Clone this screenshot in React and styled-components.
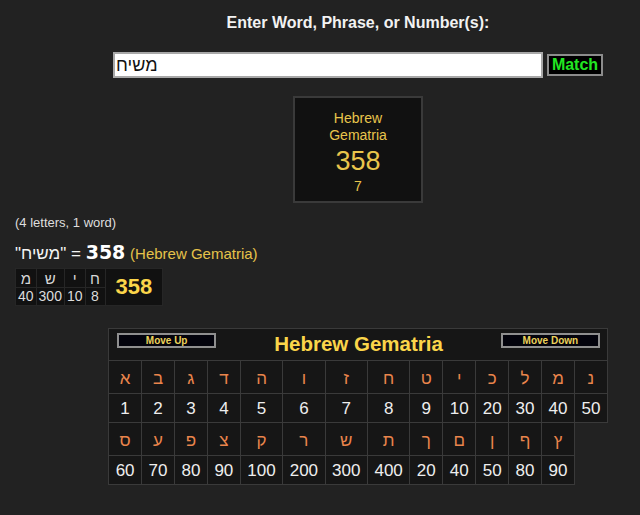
import React from 'react';
import styled, { createGlobalStyle } from 'styled-components';

const Global = createGlobalStyle`
  html, body { margin: 0; padding: 0; background: #222222; }
  body { font-family: "Liberation Sans", Arial, sans-serif; color: #ffffff; }
`;

const Page = styled.div`
  display: flex;
  flex-direction: column;
  padding-top: 14px;
`;

const Centered = styled.div`
  display: flex;
  flex-direction: column;
  align-items: center;
  padding-left: 76px;
`;

const Heading = styled.div`
  font-size: 16px;
  font-weight: bold;
  line-height: 18px;
  color: #f2f2f2;
`;

const SearchRow = styled.div`
  display: flex;
  align-items: center;
  gap: 4px;
  margin-top: 20px;
`;

const Input = styled.input`
  width: 430px;
  height: 26px;
  box-sizing: border-box;
  border: 2px solid #a8a8a8;
  background: #ffffff;
  color: #111111;
  font-family: "Liberation Sans", Arial, sans-serif;
  font-size: 18px;
  padding: 0 1px;
  outline: none;
`;

const MatchButton = styled.button`
  width: 56px;
  height: 22px;
  box-sizing: border-box;
  background: #000000;
  border: 2px solid #8c8c8c;
  color: #22e622;
  font-family: "Liberation Sans", Arial, sans-serif;
  font-weight: bold;
  font-size: 16px;
  padding: 0;
  line-height: 18px;
`;

const ValueBox = styled.div`
  margin-top: 18px;
  width: 130px;
  height: 107px;
  box-sizing: border-box;
  border: 2px solid #3a3a3a;
  background: #111111;
  display: flex;
  flex-direction: column;
  align-items: center;
  padding-top: 12px;
  color: #e9c54c;
  text-align: center;
`;

const BoxTitle = styled.div`
  font-size: 14px;
  line-height: 16.5px;
`;

const BoxValue = styled.div`
  font-size: 27px;
  line-height: 28px;
  margin-top: 4px;
`;

const BoxSub = styled.div`
  font-size: 14px;
  line-height: 16px;
  margin-top: 3px;
`;

const Results = styled.div`
  padding-left: 15px;
  margin-top: 12px;
`;

const Counts = styled.div`
  font-size: 13px;
  line-height: 15px;
  color: #dedede;
`;

const Equation = styled.div`
  margin-top: 10px;
  font-size: 17px;
  line-height: 24px;
  color: #f4f4f4;
`;

const Quoted = styled.span`
  unicode-bidi: isolate;
  direction: ltr;
`;

const EqValue = styled.b`
  font-family: "DejaVu Sans", Verdana, sans-serif;
  font-size: 19px;
  color: #ffffff;
`;

const EqCipher = styled.span`
  font-size: 15px;
  color: #e6c24a;
`;

const Breakdown = styled.table`
  margin-top: 2px;
  border-collapse: collapse;
  background: #111111;
  direction: ltr;
`;

const BdCell = styled.td`
  border: 1px solid #262626;
  padding: 0 2px;
  width: 15px;
  text-align: center;
  font-size: ${p => (p.$letter ? '15px' : '14px')};
  line-height: 17px;
  color: ${p => (p.$letter ? '#d8d8d8' : '#dcdcdc')};
  height: ${p => (p.$letter ? '18px' : '17px')};
`;

const BdTotal = styled.td`
  border: 1px solid #262626;
  padding: 0 10px;
  text-align: center;
  font-size: 22px;
  font-weight: bold;
  color: #fbd54a;
`;

const Chart = styled.table`
  margin-top: 22px;
  border-collapse: collapse;
  direction: ltr;
`;

const HeaderCell = styled.td`
  border: 1px solid #3a3a3a;
  background: #161616;
  padding: 3px 7px 4px 8px;
`;

const HeaderBar = styled.div`
  display: flex;
  justify-content: space-between;
  align-items: flex-start;
`;

const MoveButton = styled.button`
  width: 99px;
  height: 15px;
  box-sizing: border-box;
  margin-top: 1px;
  background: #03030c;
  border: 2px solid #8f8f8f;
  color: #ecd25a;
  font-family: "Liberation Sans", Arial, sans-serif;
  font-weight: bold;
  font-size: 10px;
  line-height: 11px;
  padding: 0;
`;

const ChartTitle = styled.div`
  font-size: 20.5px;
  font-weight: bold;
  line-height: 24px;
  color: #fbd54a;
`;

const LetterCell = styled.td`
  border: 1px solid #3a3a3a;
  background: #161616;
  text-align: center;
  font-size: 17px;
  line-height: 19px;
  padding: ${p => (p.$letter ? '8px 6.5px 5px' : '5px 6.5px 4px')};
  color: ${p => (p.$letter ? '#ea854c' : '#eeeeee')};
`;

const groupOne = [
  ['א', 1], ['ב', 2], ['ג', 3], ['ד', 4], ['ה', 5], ['ו', 6], ['ז', 7],
  ['ח', 8], ['ט', 9], ['י', 10], ['כ', 20], ['ל', 30], ['מ', 40], ['נ', 50],
];

const groupTwo = [
  ['ס', 60], ['ע', 70], ['פ', 80], ['צ', 90], ['ק', 100], ['ר', 200], ['ש', 300],
  ['ת', 400], ['ך', 20], ['ם', 40], ['ן', 50], ['ף', 80], ['ץ', 90],
];

const word = [['מ', 40], ['ש', 300], ['י', 10], ['ח', 8]];

function LetterRows({ group }) {
  return (
    <>
      <tr>
        {group.map(([l], i) => (
          <LetterCell key={i} $letter>{l}</LetterCell>
        ))}
      </tr>
      <tr>
        {group.map(([, v], i) => (
          <LetterCell key={i}>{v}</LetterCell>
        ))}
      </tr>
    </>
  );
}

export default function App() {
  return (
    <>
      <Global />
      <Page>
        <Centered>
          <Heading>Enter Word, Phrase, or Number(s):</Heading>
          <SearchRow>
            <Input defaultValue="משיח" />
            <MatchButton>Match</MatchButton>
          </SearchRow>
          <ValueBox>
            <BoxTitle>Hebrew<br />Gematria</BoxTitle>
            <BoxValue>358</BoxValue>
            <BoxSub>7</BoxSub>
          </ValueBox>
        </Centered>
        <Results>
          <Counts>(4 letters, 1 word)</Counts>
          <Equation>
            <Quoted>"משיח"</Quoted> = <EqValue>358</EqValue> <EqCipher>(Hebrew Gematria)</EqCipher>
          </Equation>
          <Breakdown>
            <tbody>
              <tr>
                {word.map(([l], i) => (
                  <BdCell key={i} $letter>{l}</BdCell>
                ))}
                <BdTotal rowSpan={2}>358</BdTotal>
              </tr>
              <tr>
                {word.map(([, v], i) => (
                  <BdCell key={i}>{v}</BdCell>
                ))}
              </tr>
            </tbody>
          </Breakdown>
        </Results>
        <Centered>
          <Chart>
            <tbody>
              <tr>
                <HeaderCell colSpan={14}>
                  <HeaderBar>
                    <MoveButton>Move Up</MoveButton>
                    <ChartTitle>Hebrew Gematria</ChartTitle>
                    <MoveButton>Move Down</MoveButton>
                  </HeaderBar>
                </HeaderCell>
              </tr>
              <LetterRows group={groupOne} />
              <LetterRows group={groupTwo} />
            </tbody>
          </Chart>
        </Centered>
      </Page>
    </>
  );
}
